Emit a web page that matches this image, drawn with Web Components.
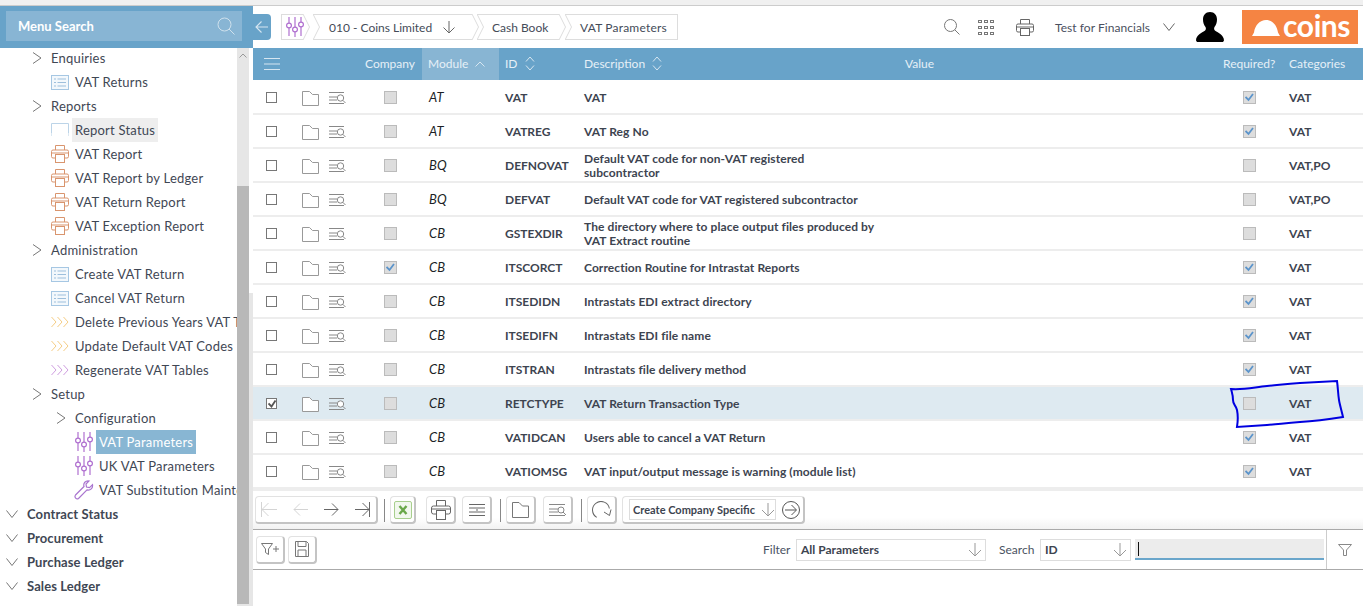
<!DOCTYPE html>
<html>
<head>
<meta charset="utf-8">
<title>VAT Parameters</title>
<style>
    html, body { margin: 0; height: 606px; overflow: hidden; background: #fff; }
    body { font-family: Lato, "Liberation Sans", sans-serif; font-size: 13px; color: #3b4350; }
</style>
</head>
<body>
<app-shell></app-shell>

<script>
const ICONS = {
    chevRight: [12, 12, '<path d="M2 .5 10 6 2 11.500" fill="none" stroke="#777"/>'],
    chevDown: [12, 8, '<path d="M.5 .5 6 7.500 11.500 .5" fill="none" stroke="#777"/>'],
    list: [18, 15, '<rect x=".5" y=".5" width="17" height="14" fill="#f3f8fc" stroke="#a6c7e3"/><path d="M3 4h2M3 7.500h2M3 11h2M6.500 4h8.500M6.500 7.500h8.500M6.500 11h8.500" stroke="#9dbfdc"/>'],
    blank: [18, 15, '<path d="M.5 10V.5h17V10" fill="none" stroke="#bcd4e8"/><path d="M.5 10v3M17.500 10v3" stroke="#dbe8f2"/>'],
    printer: [18, 18, '<g fill="none" stroke="#d9956e"><path d="M4.500 5V.5h9V5"/><rect x=".5" y="5" width="17" height="8" rx="1.500"/><path d="M.5 8h17"/><rect x="4.500" y="9.500" width="9" height="8" fill="#fff"/></g>'],
    chevrons: [18, 12, '<path d="M.5 1 5 6 .5 11M6.500 1 11 6 6.500 11M12.500 1 17 6 12.500 11" fill="none" stroke="currentColor"/>'],
    sliders: [18, 20, '<g fill="none" stroke="currentColor" stroke-width="1.200"><path d="M3 0v6M3 11v8M9 0v10M9 15v5M15 0v5M15 10v9"/><circle cx="3" cy="8.500" r="2.400"/><circle cx="9" cy="12.500" r="2.400"/><circle cx="15" cy="7.500" r="2.400"/></g>'],
    wrench: [20, 20, '<path d="M1.500 15 10 6.500C9 3 11.500.5 15 1l-3 3 .5 3 3 .7 3-3c.5 3.500-2 6-5.500 5.200L4.500 18.500C2.500 20 0 17 1.500 15Z" fill="none" stroke="#a974cf" stroke-width="1.200"/>'],
    back: [14, 14, '<path d="M13 7H1M6.500 1.500 1 7l5.500 5.500" fill="none" stroke="#d6e6f1" stroke-width="1.100"/>'],
    down: [12, 13, '<path d="M6 0v12M.5 6.500 6 12l5.500-5.500" fill="none" stroke="#666"/>'],
    downLight: [14, 14, '<path d="M7 0v13M1 7l6 6 6-6" fill="none" stroke="#999"/>'],
    search: [16, 16, '<circle cx="6.500" cy="6.500" r="6" fill="none" stroke="#777"/><path d="M10.800 10.800 15.500 15.500" stroke="#777"/>'],
    searchLight: [18, 18, '<circle cx="7.500" cy="7.500" r="6.500" fill="none" stroke="#cfe1ed"/><path d="M12 12l5.500 5.500" stroke="#cfe1ed"/>'],
    apps: [16, 15, '<g fill="none" stroke="#777">' + [0, 6, 12].map(y => [0, 6, 12].map(x => `<rect x="${x + .5}" y="${y + .5}" width="3" height="2"/>`).join('')).join('') + '</g>'],
    print: [18, 17, '<g fill="none" stroke="#666"><path d="M4.500 5V.5h9V5"/><rect x=".5" y="5" width="17" height="8" rx="1.500"/><path d="M.5 8h17"/><rect x="4.500" y="9.500" width="9" height="7" fill="#fff"/></g>'],
    print2: [20, 20, '<g fill="none" stroke="#666"><path d="M5.500 6V.5h9V6"/><rect x=".5" y="6" width="19" height="8" rx="2"/><path d="M.5 9h19"/><rect x="5.500" y="10.500" width="9" height="9" fill="#fff"/></g>'],
    person: [28, 30, '<path d="M14 0c4.500 0 7 3.200 7 7.500 0 3-1 5.500-2.500 7.500-.7 1-.5 3 .7 3.700C22 20.500 28 23 28 28.500L27 30H1l-1-1.500C0 23 6 20.500 8.800 18.700c1.200-.7 1.400-2.700.7-3.700C8 13 7 10.500 7 7.500 7 3.200 9.500 0 14 0Z" fill="#000"/>'],
    hat: [28, 16, '<path d="M0 16 2 12.500C3 5 8 0 14 0s11 5 12 12.500l2 3.500Z" fill="#fff"/>'],
    folder: [17, 15, '<path d="M.5 14.500V.5H7.500L10.500 3.500H16.500V14.500Z" fill="#fff" stroke="#999"/>'],
    finder: [17, 12, '<path d="M0 .5h15M0 5h8M0 8h8M0 11.500h15" stroke="#888"/><circle cx="11.500" cy="6" r="3.200" fill="#fff" stroke="#888"/><path d="M13.800 8.300 16.500 11" stroke="#888"/>'],
    first: [16, 15, '<path d="M.5 0v15M16 7.500H1M7.500 1 1 7.500 7.500 14" fill="none" stroke="#d4d4d4"/>'],
    prev: [15, 13, '<path d="M15 6.500H1M7 .5 1 6.500l6 6" fill="none" stroke="#d4d4d4"/>'],
    next: [15, 13, '<path d="M0 6.500h14M8 .5l6 6-6 6" fill="none" stroke="#666"/>'],
    last: [15, 15, '<path d="M14.500 0v15M0 7.500h14M7.500 1 14 7.500 7.500 14" fill="none" stroke="#666"/>'],
    excel: [18, 18, '<rect x=".5" y=".5" width="17" height="17" rx="1.500" fill="#f2f8ee" stroke="#a8cf8e"/><path d="M5.500 5l7 8M12.500 5l-7 8" stroke="#6aa84a" stroke-width="2.400"/>'],
    align: [16, 12, '<path d="M0 .5h16M0 4h16M0 8h16M0 11.500h16M8 5v2" stroke="#666"/>'],
    folderBig: [17, 16, '<path d="M.5 15.500V.5H7L10.500 4h6v11.500Z" fill="#fff" stroke="#777"/>'],
    finderBig: [17, 12, '<path d="M0 .5h16M0 5h9M0 8h9M0 11.500h16" stroke="#888"/><circle cx="12" cy="6" r="3" fill="#fff" stroke="#888"/><path d="M14 8 17 11" stroke="#888"/>'],
    refresh: [20, 18, '<path d="M15.500 3.500A8.500 8.500 0 1 0 9 17.500" fill="none" stroke="#666" transform="rotate(30 9 9)"/><path d="M12 11l5.500 3.500 1.500-6" fill="none" stroke="#666"/>'],
    go: [18, 18, '<circle cx="9" cy="9" r="8.500" fill="none" stroke="#555"/><path d="M3 9h11M9.500 4l5 5-5 5" fill="none" stroke="#555"/>'],
    funnelPlus: [19, 12, '<path d="M.5.5h11L7.500 6v5.500L4.500 9.500V6Z" fill="none" stroke="#777"/><path d="M12 6h6M15 3v6" stroke="#777"/>'],
    save: [14, 16, '<path d="M.5.5h11l2 2v13H.5Z" fill="#fff" stroke="#777"/><path d="M3 .5v5h8v-5M3 15.500V9h8v6.500" fill="none" stroke="#777"/>'],
    funnel: [14, 12, '<path d="M.5.5h13L8.500 6v5.500h-3V6Z" fill="none" stroke="#888"/>'],
    sortUp: [10, 6, '<path d="M.5 5.500 5 1l4.500 4.500" fill="none" stroke="#d6e6f1"/>'],
    sortBoth: [10, 15, '<path d="M1 5.500 5 1l4 4.500M1 9.500 5 14l4-4.500" fill="none" stroke="#d6e6f1"/>'],
    menu: [16, 12, '<path d="M0 .5h16M0 6h16M0 11.500h16" stroke="#d6e6f1"/>'],
    chevDownDark: [12, 8, '<path d="M.5 .5 6 7.500 11.500 .5" fill="none" stroke="#666"/>']
};

function icon(name) {
    const [w, h, body] = ICONS[name];
    return `<svg width="${w}" height="${h}" viewBox="0 0 ${w} ${h}" style="display:block;flex:none">${body}</svg>`;
}

// every element is a thin wrapper round one shadow root
function define(tag, css, render) {
    customElements.define(tag, class extends HTMLElement {
        constructor() {
            super();
            this.attachShadow({ mode: "open" });
        }
        connectedCallback() {
            this.shadowRoot.innerHTML = `<style>${css}</style>${render(this)}`;
        }
    });
}

define("menu-item", `
    :host { display: flex; align-items: center; height: 24px; white-space: nowrap; font-size: 13px; letter-spacing: .22px; color: #3f4754; }
    :host([bold]) { font-weight: 700; letter-spacing: .1px; }
    .ic { display: flex; justify-content: center; flex: none; }
    .txt { padding: 0 3px; height: 24px; line-height: 24px; }
    :host([hl]) .txt { background: #eee; }
    :host([sel]) .txt { background: #88b6d3; color: #fff; }
`, el => {
    const col = el.getAttribute("color");
    return `<span class="ic" style="width:${el.getAttribute("w") || 18}px;margin:0 ${el.getAttribute("gap") || 3}px 0 ${el.getAttribute("indent") || 0}px;${col ? "color:" + col : ""}">${icon(el.getAttribute("icon"))}</span><span class="txt"><slot></slot></span>`;
});

define("side-menu", `
    :host { display: flex; flex-direction: column; width: 253px; flex: none; height: 600px; overflow: hidden; position: relative; }
    .head { height: 42px; flex: none; background: #68a3c9; padding: 5px 11px 6px 6px; box-sizing: border-box; position: relative; z-index: 1; }
    .box { height: 30px; background: #88b5d4; display: flex; align-items: center; justify-content: space-between; padding: 0 7px 0 12px; color: #fff; font-weight: 700; font-size: 13px; }
    .body { flex: 1; display: flex; min-height: 0; }
    .tree { width: 237px; flex: none; overflow: hidden; margin-top: -2px; }
    .bar { width: 12px; flex: none; background: #e6e6e6; display: flex; flex-direction: column; }
    .up { height: 138px; flex: none; display: flex; justify-content: center; padding-top: 5px; box-sizing: border-box; }
    .thumb { flex: 1; background: #b8b8b8; margin-bottom: 2px; }
    .edge { width: 4px; flex: none; display: flex; flex-direction: column; }
    .edge i { display: block; flex: 1; margin-top: 245px; background: #e6e6e6; }
`, () => `
    <div class="head"><div class="box">Menu Search${icon("searchLight")}</div></div>
    <div class="body">
        <div class="tree"><slot></slot></div>
        <div class="bar"><div class="up"><svg width="8" height="5"><path d="M.5 4.500 4 1l3.500 3.500" fill="none" stroke="#999"/></svg></div><div class="thumb"></div></div>
        <div class="edge"><i></i></div>
    </div>
`);

define("bread-crumb", `
    :host { display: flex; align-items: center; height: 26px; box-sizing: border-box; border: solid #ddd; border-width: 1px 0; position: relative; font-size: 12px; color: #444b58; white-space: nowrap; }
    :host([first]) { border-left: 1px solid #ddd; }
    :host([last]) { border-right: 1px solid #ddd; }
    :host(:not([last]))::after, :host(:not([first]))::before {
        content: ""; position: absolute; top: -1px; width: 7px; height: 26px;
        background: url("data:image/svg+xml,%3Csvg xmlns='http://www.w3.org/2000/svg' width='7' height='26'%3E%3Cpath d='M0 0 6.500 13 0 26' fill='none' stroke='%23dddddd'/%3E%3C/svg%3E");
    }
    :host(:not([last]))::after { right: -7px; }
    :host(:not([first]))::before { left: 0; }
`, () => `<slot></slot>`);

define("top-bar", `
    :host { display: flex; align-items: center; height: 42px; flex: none; font-size: 12px; position: relative; }
    .back { width: 18px; height: 26px; background: #68a3c9; border-radius: 0 4px 4px 0; display: flex; align-items: center; justify-content: center; margin-right: 10px; }
    .crumbs { display: flex; align-items: center; }
    .right { margin-left: auto; display: flex; align-items: center; }
    .user { color: #4a5060; margin: 0 12px 0 21px; letter-spacing: .05px; width: 96px; white-space: nowrap; }
    .logo { width: 116px; height: 34px; background: #f58443; display: flex; align-items: center; margin: 0 5px 0 18px; padding-left: 10px; box-sizing: border-box; color: #fff; font-size: 30px; font-weight: 700; line-height: 34px; letter-spacing: -.4px; }
    .logo span { margin: -4px 0 0 3px; }
    .logo svg { margin-top: 1px; }
`, () => `
    <div class="back">${icon("back")}</div>
    <div class="crumbs">
        <bread-crumb first style="width:22px;color:#b070d0"><span style="margin-left:4px;color:#b070d0">${icon("sliders")}</span></bread-crumb>
        <bread-crumb style="width:159px;margin-left:10px"><span style="margin-left:16px;width:114px">010 - Coins Limited</span>${icon("down")}</bread-crumb>
        <bread-crumb style="width:82px;margin-left:5px;padding-left:15px;box-sizing:border-box">Cash Book</bread-crumb>
        <bread-crumb last style="width:113px;margin-left:6px;padding-left:15px;box-sizing:border-box;letter-spacing:.2px">VAT Parameters</bread-crumb>
    </div>
    <div class="right">
        <span>${icon("search")}</span>
        <span style="margin-left:18px">${icon("apps")}</span>
        <span style="margin-left:22px">${icon("print")}</span>
        <span class="user">Test for Financials</span>
        ${icon("chevDownDark")}
        <span style="margin-left:21px">${icon("person")}</span>
        <div class="logo">${icon("hat")}<span>coins</span></div>
    </div>
`);

const GRID_COLS = "105px 64px 77px 79px 320px 320px 65px 80px";

define("grid-head", `
    :host { display: grid; grid-template-columns: ${GRID_COLS}; height: 33px; box-sizing: border-box; flex: none; border-bottom: 1px solid #fff; color: #e6f0f7; font-size: 12px; }
    div { display: flex; align-items: center; padding: 0 0 1px 6px; white-space: nowrap; gap: 7px; background: #68a3c9; }
    .mod { background: #88b5d3; }
    .c { padding-left: 7px; }
`, () => `
    <div style="padding-left:11px">${icon("menu")}</div>
    <div class="c">Company</div>
    <div class="mod">Module ${icon("sortUp")}</div>
    <div>ID ${icon("sortBoth")}</div>
    <div>Description ${icon("sortBoth")}</div>
    <div class="c">Value</div>
    <div style="padding-left:5px">Required?</div>
    <div>Categories</div>
`);

define("check-box", `
    :host { display: block; width: 13px; height: 13px; box-sizing: border-box; background: #ddd; border: 1px solid #bbb; position: relative; }
    :host([plain]) { width: 11px; height: 11px; background: #fff; border: 1.500px solid #777; }
    svg { display: block; position: absolute; left: 1px; top: 1px; }
`, el => el.hasAttribute("checked")
    ? `<svg width="9" height="9" viewBox="0 0 9 9"><path d="${el.hasAttribute("plain") ? "M.5 3.500 3.500 6.500 7.500 .5" : "M.5 4 3.500 7 8 1"}" fill="none" stroke="${el.hasAttribute("plain") ? "#555" : "#5b94cb"}" stroke-width="1.800"/></svg>`
    : "");

define("grid-row", `
    :host { display: grid; grid-template-columns: ${GRID_COLS}; height: 34px; box-sizing: border-box; border-bottom: 2px solid #ededed; align-items: center; font-size: 12px; font-weight: 700; letter-spacing: .08px; color: #3d4450; }
    :host([selected]) { background: #deeaf1; }
    .tools { display: flex; align-items: center; padding-left: 13px; }
    .tools .f { margin: 2px 0 0 25px; }
    .tools .s { margin: 2px 0 0 10px; }
    .mod { font-style: italic; font-weight: 400; font-size: 13px; color: #1c1f26; padding-left: 7px; }
    .t { padding-left: 6px; white-space: nowrap; letter-spacing: 0; }
    .d { padding: 2px 20px 0 6px; line-height: 14px; }
    .co { padding-left: 26px; }
    .rq { padding-left: 25px; }
`, el => `
    <div class="tools"><check-box plain ${el.hasAttribute("selected") ? "checked" : ""}></check-box><span class="f">${icon("folder")}</span><span class="s">${icon("finder")}</span></div>
    <div class="co"><check-box ${el.hasAttribute("company") ? "checked" : ""}></check-box></div>
    <div class="mod">${el.getAttribute("module")}</div>
    <div class="t">${el.getAttribute("code")}</div>
    <div class="d"><slot></slot></div>
    <div></div>
    <div class="rq"><check-box ${el.hasAttribute("required") ? "checked" : ""}></check-box></div>
    <div class="t">${el.getAttribute("cats") || "VAT"}</div>
`);

define("tool-btn", `
    :host { display: flex; align-items: center; justify-content: center; height: 28px; box-sizing: border-box; border: 1px solid #e2e2e2; border-right: 2px solid #c4c4c4; border-bottom: 2px solid #c4c4c4; border-radius: 4px; background: #fff; flex: none; }
`, () => `<slot></slot>`);

define("tool-bar", `
    :host { display: flex; align-items: center; height: 41px; flex: none; box-sizing: border-box; border-top: 2px solid #ededed; border-bottom: 1px solid #aaa; padding: 0 0 0 2px; background: linear-gradient(#fff 70%, #f2f2f2); }
    .sep { width: 1px; height: 23px; background: #888; margin: 0 5px 0 6px; flex: none; }
    .sep.b { margin: 0 5px 0 8px; }
    .pager { display: flex; align-items: center; width: 100%; gap: 16px; padding-left: 5px; box-sizing: border-box; }
    .sel { width: 147px; height: 21px; box-sizing: border-box; border: 1px solid #ddd; display: flex; align-items: center; justify-content: space-between; padding: 0 0 0 3px; font-size: 11px; font-weight: 700; color: #3d4450; white-space: nowrap; margin: 0 6px; }
`, () => `
    <tool-btn style="width:123px"><div class="pager">${icon("first")}${icon("prev")}${icon("next")}${icon("last")}</div></tool-btn>
    <div class="sep"></div>
    <tool-btn style="width:26px">${icon("excel")}</tool-btn>
    <tool-btn style="width:30px;margin-left:10px">${icon("print2")}</tool-btn>
    <tool-btn style="width:30px;margin-left:6px">${icon("align")}</tool-btn>
    <div class="sep b"></div>
    <tool-btn style="width:30px">${icon("folderBig")}</tool-btn>
    <tool-btn style="width:30px;margin-left:7px">${icon("finderBig")}</tool-btn>
    <div class="sep b"></div>
    <tool-btn style="width:30px">${icon("refresh")}</tool-btn>
    <tool-btn style="width:183px;margin-left:5px;justify-content:flex-start"><div class="sel">Create Company Specific ${icon("downLight")}</div>${icon("go")}</tool-btn>
`);

define("drop-down", `
    :host { display: flex; align-items: center; justify-content: space-between; height: 22px; box-sizing: border-box; border: 1px solid #ddd; padding: 0 3px 0 4px; font-size: 12px; font-weight: 700; color: #3d4450; flex: none; }
`, () => `<slot></slot>${icon("downLight")}`);

define("filter-bar", `
    :host { display: flex; align-items: center; height: 40px; flex: none; box-sizing: border-box; border-bottom: 1px solid #aaa; padding-left: 3px; font-size: 12px; color: #4a5262; }
    .btns { display: flex; gap: 3px; }
    .btns tool-btn { width: 29px; }
    label { flex: none; }
    .inp { width: 189px; height: 21px; box-sizing: border-box; background: #ececec; border-bottom: 2px solid #6aa6cb; margin-left: 4px; padding: 3px 0 0 3px; }
    .inp i { display: block; width: 1px; height: 14px; background: #111; }
    .fn { width: 37px; height: 39px; flex: none; box-sizing: border-box; border-left: 1px solid #ccc; margin-left: 2px; display: flex; align-items: center; justify-content: center; }
`, () => `
    <div class="btns"><tool-btn>${icon("funnelPlus")}</tool-btn><tool-btn>${icon("save")}</tool-btn></div>
    <label style="margin-left:446px;width:33px">Filter</label>
    <drop-down style="width:190px">All Parameters</drop-down>
    <label style="margin-left:13px;width:41px">Search</label>
    <drop-down style="width:91px">ID</drop-down>
    <div class="inp"><i></i></div>
    <div class="fn">${icon("funnel")}</div>
`);

define("app-shell", `
    :host { display: flex; flex-direction: column; height: 606px; overflow: hidden; position: relative; }
    .strip { height: 6px; flex: none; box-sizing: border-box; background: #f0f0f0; border-bottom: 1px solid #ccc; }
    .cols { flex: 1; display: flex; min-height: 0; }
    .main { flex: 1; min-width: 0; display: flex; flex-direction: column; }
    .ink { position: absolute; left: 0; top: 0; pointer-events: none; }
`, () => `
    <div class="strip"></div>
    <div class="cols">
        <side-menu>
            <menu-item indent="31" w="12" gap="5" icon="chevRight">Enquiries</menu-item>
            <menu-item indent="51" icon="list">VAT Returns</menu-item>
            <menu-item indent="31" w="12" gap="5" icon="chevRight">Reports</menu-item>
            <menu-item indent="51" icon="blank" hl>Report Status</menu-item>
            <menu-item indent="51" icon="printer">VAT Report</menu-item>
            <menu-item indent="51" icon="printer">VAT Report by Ledger</menu-item>
            <menu-item indent="51" icon="printer">VAT Return Report</menu-item>
            <menu-item indent="51" icon="printer">VAT Exception Report</menu-item>
            <menu-item indent="31" w="12" gap="5" icon="chevRight">Administration</menu-item>
            <menu-item indent="51" icon="list">Create VAT Return</menu-item>
            <menu-item indent="51" icon="list">Cancel VAT Return</menu-item>
            <menu-item indent="51" icon="chevrons" color="#f5cd85">Delete Previous Years VAT Transactions</menu-item>
            <menu-item indent="51" icon="chevrons" color="#f5cd85">Update Default VAT Codes</menu-item>
            <menu-item indent="51" icon="chevrons" color="#cf9ee0">Regenerate VAT Tables</menu-item>
            <menu-item indent="31" w="12" gap="5" icon="chevRight">Setup</menu-item>
            <menu-item indent="55" w="12" gap="5" icon="chevRight">Configuration</menu-item>
            <menu-item indent="75" icon="sliders" color="#b070d0" sel>VAT Parameters</menu-item>
            <menu-item indent="75" icon="sliders" color="#b070d0">UK VAT Parameters</menu-item>
            <menu-item indent="75" w="18" icon="wrench">VAT Substitution Maintenance</menu-item>
            <menu-item bold indent="6" w="12" gap="6" icon="chevDown">Contract Status</menu-item>
            <menu-item bold indent="6" w="12" gap="6" icon="chevDown">Procurement</menu-item>
            <menu-item bold indent="6" w="12" gap="6" icon="chevDown">Purchase Ledger</menu-item>
            <menu-item bold indent="6" w="12" gap="6" icon="chevDown">Sales Ledger</menu-item>
        </side-menu>
        <div class="main">
            <top-bar></top-bar>
            <grid-head></grid-head>
            <grid-row module="AT" code="VAT" required>VAT</grid-row>
            <grid-row module="AT" code="VATREG" required>VAT Reg No</grid-row>
            <grid-row module="BQ" code="DEFNOVAT" cats="VAT,PO">Default VAT code for non-VAT registered subcontractor</grid-row>
            <grid-row module="BQ" code="DEFVAT" cats="VAT,PO">Default VAT code for VAT registered subcontractor</grid-row>
            <grid-row module="CB" code="GSTEXDIR">The directory where to place output files produced by VAT Extract routine</grid-row>
            <grid-row module="CB" code="ITSCORCT" company required>Correction Routine for Intrastat Reports</grid-row>
            <grid-row module="CB" code="ITSEDIDN" required>Intrastats EDI extract directory</grid-row>
            <grid-row module="CB" code="ITSEDIFN" required>Intrastats EDI file name</grid-row>
            <grid-row module="CB" code="ITSTRAN" required>Intrastats file delivery method</grid-row>
            <grid-row module="CB" code="RETCTYPE" selected>VAT Return Transaction Type</grid-row>
            <grid-row module="CB" code="VATIDCAN" required>Users able to cancel a VAT Return</grid-row>
            <grid-row module="CB" code="VATIOMSG" required>VAT input/output message is warning (module list)</grid-row>
            <tool-bar></tool-bar>
            <filter-bar></filter-bar>
        </div>
    </div>
    <svg class="ink" width="1363" height="606"><path d="M1231 389C1245 390 1255 387 1267 386S1285 384 1300 383L1337 381C1338 388 1338 394 1339 400S1342 412 1343 417C1330 419 1315 421 1300 422S1280 424 1267 425L1237 427C1238 421 1238 415 1237 410S1233 405 1233 400 1232 393 1231 389Z" fill="none" stroke="#0000e0" stroke-width="2"/></svg>
`);
</script>
</body>
</html>
